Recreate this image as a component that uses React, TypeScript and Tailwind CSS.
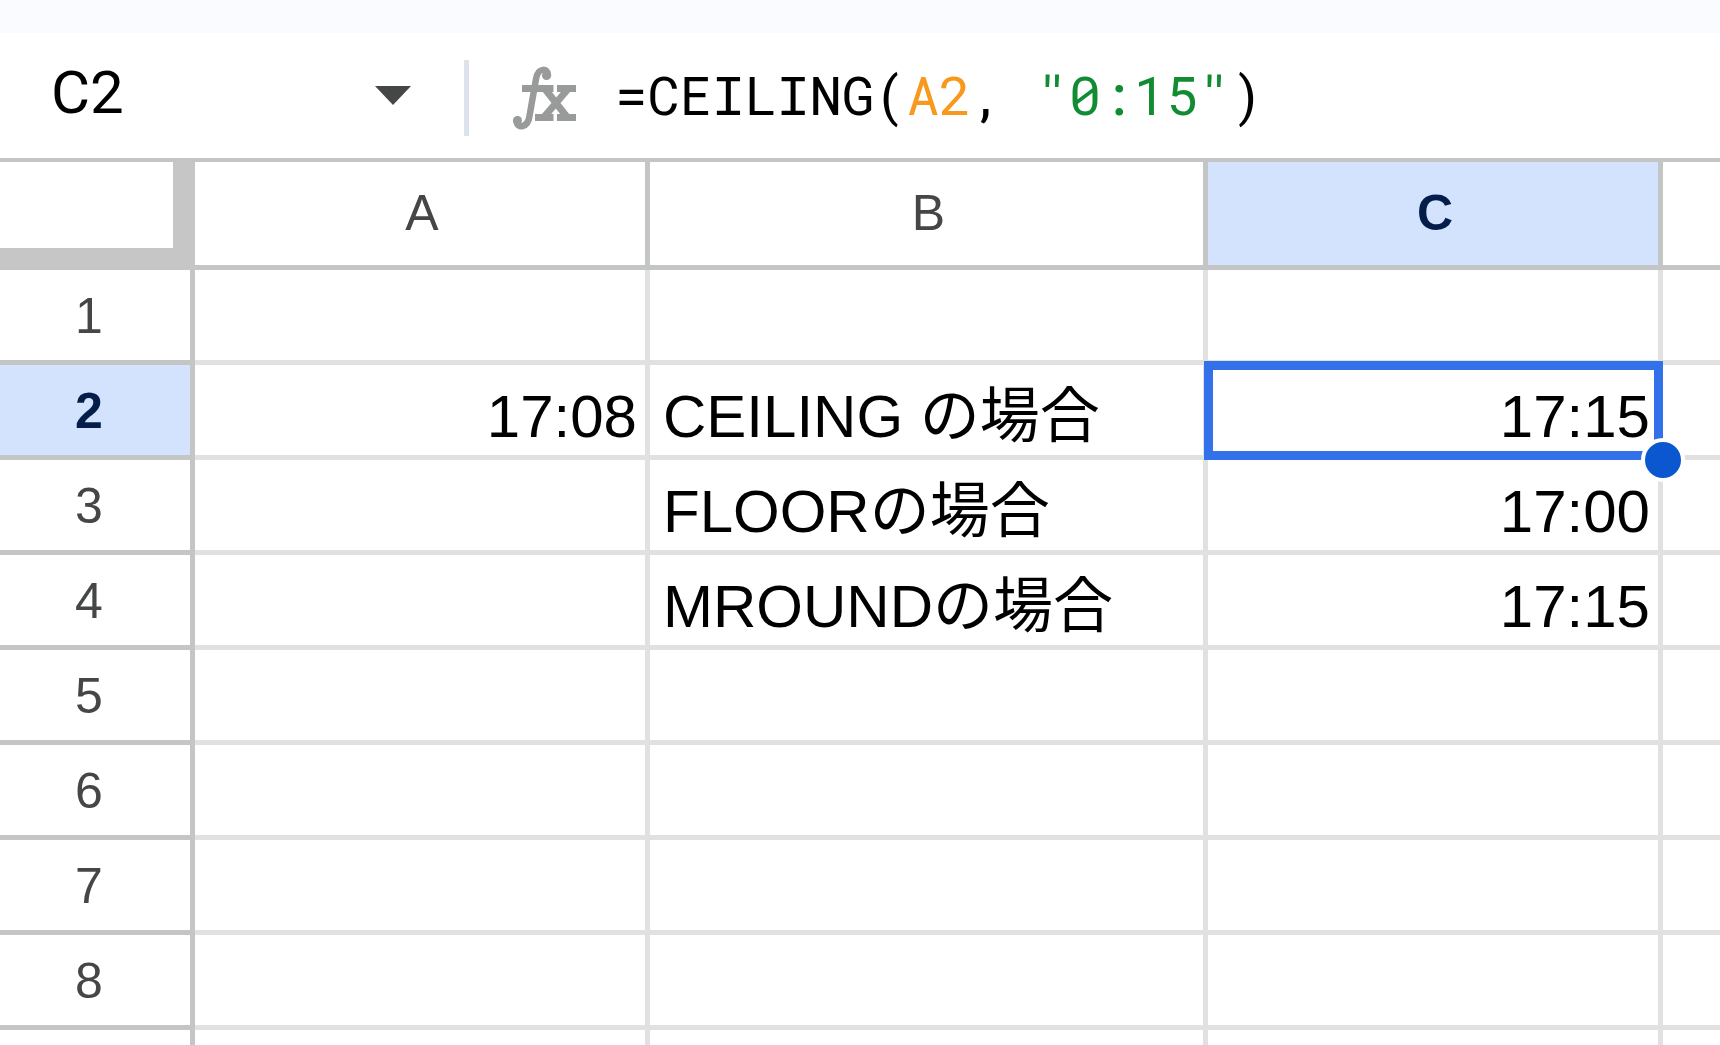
import { useState } from 'react';
import type { ReactNode } from 'react';

const columns = ['A', 'B', 'C', ''];

const rows: Record<string, string>[] = [
    {},
    { A: '17:08', B: 'CEILING の場合', C: '17:15' },
    { B: 'FLOORの場合', C: '17:00' },
    { B: 'MROUNDの場合', C: '17:15' },
    {},
    {},
    {},
    {}
];

const selected = { column: 'C', row: 2 };

function FxIcon() {
    return (
        <svg viewBox="0 0 64 64" className="w-16 h-16 flex-shrink-0" fill="none" stroke="#999b9a" aria-hidden="true">
            <path d="M35 9C35 2 25 1 23 13L16.500 50C15 62 4 63 3.500 55" strokeWidth="6.500" strokeLinecap="round" />
            <circle cx="33.500" cy="9.500" r="4.500" fill="#999b9a" stroke="none" />
            <circle cx="4.500" cy="54.500" r="4.500" fill="#999b9a" stroke="none" />
            <path d="M9 22.500H40.500M44 22.500H63M22 51.500H40.500M44 51.500H63" strokeWidth="7" />
            <path d="M32 23L54 51M55 23L31 51" strokeWidth="7" />
        </svg>
    );
}

function FormulaBar() {
    const [cellName, setCellName] = useState('C2');

    return (
        <div className="flex items-center h-[125px] flex-shrink-0 pt-1 bg-white">
            <input
                aria-label="Name box"
                value={cellName}
                onChange={(e) => setCellName(e.target.value)}
                className="w-80 pl-[51px] pb-2.5 text-[60px] leading-none font-[Roboto,sans-serif] text-black bg-transparent outline-none"
            />
            <button aria-label="Named ranges" className="ml-[55px] pb-1 flex-shrink-0">
                <svg viewBox="0 0 36 19" className="w-9 h-[19px]" fill="#444746">
                    <path d="M0 0H36L18 19Z" />
                </svg>
            </button>
            <div className="ml-[53px] w-[5px] h-[76px] flex-shrink-0 bg-[#dde3ea]" />
            <div className="ml-11 mr-[38px]">
                <FxIcon />
            </div>
            <div
                role="textbox"
                aria-label="Formula"
                contentEditable
                suppressContentEditableWarning
                spellCheck={false}
                className="flex-1 pb-2 whitespace-pre text-[54px] leading-none font-['Roboto_Mono','Liberation_Mono',monospace] text-black outline-none"
            >
                =CEILING(<span className="text-[#f8981d]">A2</span>, <span className="text-[#128c32]">"0:15"</span>)
            </div>
        </div>
    );
}

function ColumnHeader({ name }: { name: string }) {
    const active = name === selected.column;

    return (
        <th
            scope="col"
            className={
                active
                    ? 'border-r-[5px] border-b-[5px] border-[#c4c6c5] pl-1 pb-0.5 bg-[#d3e3fd] text-[#041e49] font-bold'
                    : 'border-r-[5px] border-b-[5px] border-[#c4c6c5] pl-1 pb-0.5 text-[#444746] font-normal last:border-r-0'
            }
        >
            {name}
        </th>
    );
}

function Cell({ column, active, children }: { column: string; active: boolean; children: ReactNode }) {
    if (active) {
        return (
            <td className="relative z-10 border-r-[5px] border-b-[5px] border-[#e1e1e1] pt-3.5 pr-2 text-right">
                {children}
                <div className="absolute -top-1 -left-1 -right-[5px] -bottom-[5px] border-[9px] border-[#3271ea]" />
                <div className="absolute -right-[27px] -bottom-[27px] w-11 h-11 rounded-full border-4 border-white bg-[#0b57d0]" />
            </td>
        );
    }

    return (
        <td
            className={
                column === 'B'
                    ? 'border-r-[5px] border-b-[5px] border-[#e1e1e1] pt-3.5 pl-[13px] text-left'
                    : 'border-r-[5px] border-b-[5px] border-[#e1e1e1] pt-3.5 pr-2 text-right last:border-r-0'
            }
        >
            {children}
        </td>
    );
}

function Sheet() {
    return (
        <div className="flex-1 min-h-0 overflow-hidden border-t-4 border-[#c4c6c5]">
            <table className="w-full table-fixed border-separate border-spacing-0 text-[60px] leading-none text-black">
                <colgroup>
                    <col className="w-[195px]" />
                    <col className="w-[455px]" />
                    <col className="w-[558px]" />
                    <col className="w-[455px]" />
                    <col />
                </colgroup>
                <thead className="text-[50px]">
                    <tr className="h-[108px]">
                        <td className="border-r-[22px] border-b-[22px] border-[#c6c6c6]" />
                        {columns.map((name) => (
                            <ColumnHeader key={name} name={name} />
                        ))}
                    </tr>
                </thead>
                <tbody>
                    {rows.map((row, index) => (
                        <tr key={index} className="h-[95px]">
                            <th
                                scope="row"
                                className={
                                    index + 1 === selected.row
                                        ? 'border-r-[5px] border-b-[5px] border-[#c4c6c5] pt-0.5 pr-3 text-[50px] bg-[#d3e3fd] text-[#041e49] font-bold'
                                        : 'border-r-[5px] border-b-[5px] border-[#c4c6c5] pt-0.5 pr-3 text-[50px] text-[#444746] font-normal'
                                }
                            >
                                {index + 1}
                            </th>
                            {columns.map((name) => (
                                <Cell
                                    key={name}
                                    column={name}
                                    active={name === selected.column && index + 1 === selected.row}
                                >
                                    {row[name]}
                                </Cell>
                            ))}
                        </tr>
                    ))}
                    {/* top edge of the next row */}
                    <tr className="h-[95px]">
                        <td className="border-r-[5px] border-[#c4c6c5]" />
                        {columns.map((name) => (
                            <td key={name} className="border-r-[5px] border-[#e1e1e1] last:border-r-0" />
                        ))}
                    </tr>
                </tbody>
            </table>
        </div>
    );
}

export default function App() {
    return (
        <div
            lang="ja"
            className="flex flex-col h-screen overflow-hidden bg-white font-['Liberation_Sans','Noto_Sans_CJK_JP',sans-serif]"
        >
            <div className="h-[33px] flex-shrink-0 bg-[#f9fbff]" />
            <FormulaBar />
            <Sheet />
        </div>
    );
}
